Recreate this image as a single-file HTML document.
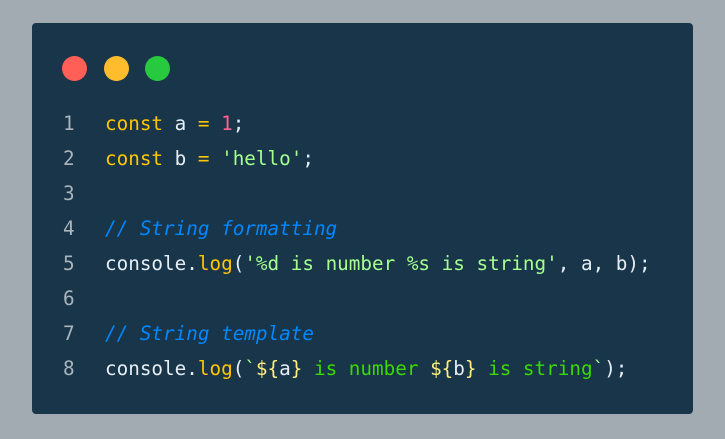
<!DOCTYPE html>
<html><head><style>
html,body{margin:0;padding:0;}
body{width:725px;height:439px;background:#a3abb2;position:relative;overflow:hidden;}
.card{position:absolute;left:32px;top:23px;width:661px;height:391px;background:#193549;border-radius:4px;}
.dot{position:absolute;top:33px;width:25px;height:25px;border-radius:50%;}
.code{position:absolute;left:0;top:83px;font-family:"DejaVu Sans Mono","Liberation Mono",monospace;font-size:19.3px;line-height:35px;color:#e6eef5;white-space:pre;}
.l{display:inline-block;width:73px;padding-left:31px;box-sizing:border-box;color:#aab4bc}
.k{color:#ffc600}.n{color:#ff628c}.s{color:#a5ff90}.c{color:#0088ff;font-style:italic}.t{color:#3ad900}.y{color:#ffee80}
</style></head><body>
<div class="card">
<div class="dot" style="left:30px;background:#ff5f56"></div>
<div class="dot" style="left:72px;background:#ffbd2e"></div>
<div class="dot" style="left:113px;background:#27c93f"></div>
<div class="code"><div><span class="l">1</span><span class="k">const</span> a <span class="k">=</span> <span class="n">1</span>;</div><div><span class="l">2</span><span class="k">const</span> b <span class="k">=</span> <span class="s">'hello'</span>;</div><div><span class="l">3</span></div><div><span class="l">4</span><span class="c">// String formatting</span></div><div><span class="l">5</span>console.<span class="k">log</span>(<span class="s">'%d is number %s is string'</span>, a, b);</div><div><span class="l">6</span></div><div><span class="l">7</span><span class="c">// String template</span></div><div><span class="l">8</span>console.<span class="k">log</span>(<span class="s">`</span><span class="y">${</span>a<span class="y">}</span><span class="t"> is number </span><span class="y">${</span>b<span class="y">}</span><span class="t"> is string</span><span class="s">`</span>);</div></div>
</div>
</body></html>
